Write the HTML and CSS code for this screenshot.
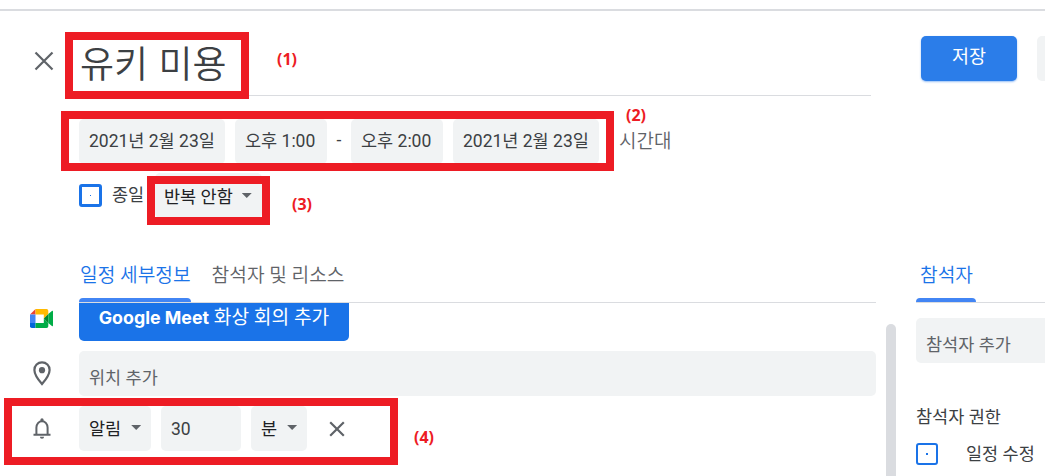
FILE: index.html
```html
<!DOCTYPE html>
<html lang="ko">
<head>
    <meta charset="UTF-8">
    <meta name="viewport" content="width=device-width, initial-scale=1.0">
    <title>유키 미용</title>
    <link rel="stylesheet" href="styles.css">
</head>
<body>
    <div class="page">
        <header class="header">
            <svg class="close" viewBox="0 0 20 20"><path d="M1.5 1.5l17 17M18.5 1.5l-17 17"/></svg>
            <div class="title">유키 미용</div>
            <button class="save">저장</button>
            <div class="more"></div>
        </header>

        <div class="time-row">
            <div class="chip date">2021년 2월 23일</div>
            <div class="chip time">오후 1:00</div>
            <span class="dash">-</span>
            <div class="chip time">오후 2:00</div>
            <div class="chip date">2021년 2월 23일</div>
            <span class="timezone">시간대</span>
        </div>

        <div class="repeat-row">
            <span class="checkbox small-dot"></span>
            <span class="allday">종일</span>
            <div class="chip repeat">반복 안함 <i class="arrow"></i></div>
        </div>

        <div class="columns">
            <main class="details">
                <nav class="tabs">
                    <span class="tab active">일정 세부정보</span>
                    <span class="tab">참석자 및 리소스</span>
                </nav>
                <div class="row meet-row">
                    <svg class="meet-icon" viewBox="0 0 24 19">
                        <path fill="#ea4335" d="M0 5.5L5.5 0v5.5z"/>
                        <path fill="#ffba00" d="M5.5 0h11A1.8 1.8 0 0 1 18.3 1.8V5l-4.5 4.5v-4H5.5z"/>
                        <path fill="#4285f4" d="M0 5.5h5.5V14H0z"/>
                        <path fill="#0066da" d="M0 14h5.5v5H1.8A1.8 1.8 0 0 1 0 17.2z"/>
                        <path fill="#00ac47" d="M5.5 14h8.3V9.5l4.5 4.5v3.2a1.8 1.8 0 0 1-1.8 1.8h-11z"/>
                        <path fill="#00832d" d="M13.8 9.5L18.3 5v9z"/>
                        <path fill="#00ac47" d="M18.3 5l3.6-3c.6-.5 1.1-.2 1.1.5v14c0 .7-.5 1-1.1.5l-3.6-3z"/>
                    </svg>
                    <button class="meet"><b>Google Meet</b> 화상 회의 추가</button>
                </div>
                <div class="row">
                    <svg class="pin-icon" viewBox="0 0 18 25">
                        <path fill="none" stroke="#5f6368" stroke-width="2.2" d="M9 1.4c-4.3 0-7.6 3.3-7.6 7.5C1.4 14.2 9 23 9 23s7.6-8.8 7.6-14.1c0-4.2-3.3-7.5-7.6-7.5z"/>
                        <circle cx="9" cy="9.2" r="3.1" fill="#5f6368"/>
                    </svg>
                    <div class="chip location">위치 추가</div>
                </div>
                <div class="row">
                    <svg class="bell-icon" viewBox="0 0 18 21">
                        <path fill="none" stroke="#5f6368" stroke-width="2" d="M0.5 16.8h17M3.4 16.8V9.5C3.4 6 5.8 3.2 9 3.2s5.6 2.8 5.6 6.3v7.3"/>
                        <path fill="#5f6368" d="M7.4 3.4V1.8a1.6 1.6 0 0 1 3.2 0v1.6zM6.9 18.7h4.2a2.1 2 0 0 1-4.2 0z"/>
                    </svg>
                    <div class="chip notify">알림 <i class="arrow"></i></div>
                    <div class="chip amount">30</div>
                    <div class="chip unit">분 <i class="arrow"></i></div>
                    <svg class="remove" viewBox="0 0 16 16"><path d="M1.2 1.2l13.6 13.6M14.8 1.2L1.2 14.8"/></svg>
                </div>
            </main>

            <div class="scrollbar"></div>

            <aside class="guests">
                <nav class="tabs">
                    <span class="tab active">참석자</span>
                </nav>
                <div class="chip add-guest">참석자 추가</div>
                <div class="permission-title">참석자 권한</div>
                <div class="permission">
                    <span class="checkbox"></span>
                    <span class="permission-name">일정 수정</span>
                </div>
            </aside>
        </div>

        <!-- numbered callouts -->
        <div class="mark mark-1"></div>
        <div class="mark mark-2"></div>
        <div class="mark mark-3"></div>
        <div class="mark mark-4"></div>
        <span class="num num-1">(1)</span>
        <span class="num num-2">(2)</span>
        <span class="num num-3">(3)</span>
        <span class="num num-4">(4)</span>
    </div>
</body>
</html>
```
FILE: styles.css
```css
* {
    box-sizing: border-box;
}

body {
    margin: 0;
    background: #fff;
    color: #3c4043;
    font-family: Roboto, "Noto Sans CJK KR", sans-serif;
    font-size: 17.5px;
}

button {
    border: 0;
    padding: 0;
    font: inherit;
    color: #fff;
}

.page {
    position: relative;
    width: 1045px;
    height: 476px;
    padding-top: 9px;
    overflow: hidden;
}

/* Header */
.header {
    display: flex;
    align-items: flex-start;
    height: 110px;
    padding-left: 34px;
    border-top: 2px solid #dadce0;
}
.close {
    flex: none;
    width: 20px;
    height: 20px;
    margin: 40px 25px 0 0;
}
.close path, .remove path {
    fill: none;
    stroke: #5f6368;
    stroke-width: 2.2;
}
.title {
    flex: none;
    width: 792px;
    height: 85px;
    padding-left: 1px;
    border-bottom: 1px solid #dadce0;
    font-family: "Noto Sans CJK KR", sans-serif;
    font-size: 37px;
    font-weight: 350;
    line-height: 102px;
}
.save {
    flex: none;
    width: 96px;
    height: 45px;
    margin: 25px 20px 0 50px;
    padding-bottom: 2px;
    border-radius: 5px;
    background: #2b7de9;
    box-shadow: 0 1px 2px rgba(26, 115, 232, 0.45);
    font-size: 18.5px;
    line-height: 41px;
}
.more {
    flex: none;
    width: 60px;
    height: 45px;
    margin-top: 25px;
    border-radius: 5px;
    background: #f1f3f4;
}

/* Grey input boxes */
.chip {
    flex: none;
    display: flex;
    align-items: center;
    height: 45px;
    padding-left: 10px;
    border-radius: 5px;
    background: #f1f3f4;
    white-space: nowrap;
}
.arrow {
    width: 10px;
    height: 5px;
    background: #5f6368;
    clip-path: polygon(0 0, 100% 0, 50% 100%);
}

/* Date and time */
.time-row {
    display: flex;
    align-items: center;
    height: 45px;
    padding-left: 79px;
}
.date, .time {
    padding-bottom: 5px;
}
.date {
    width: 146px;
}
.time {
    width: 92px;
}
.date + .time, .time + .date {
    margin-left: 10px;
}
.dash {
    width: 24px;
    padding-bottom: 3px;
    text-align: center;
}
.timezone {
    margin-left: 20px;
    padding-bottom: 5px;
    color: #5f6368;
    font-size: 19px;
    font-weight: 350;
}

.repeat-row {
    display: flex;
    align-items: center;
    height: 45px;
    margin-top: 9px;
    padding-left: 79px;
}
.checkbox {
    display: flex;
    flex: none;
    align-items: center;
    justify-content: center;
    width: 22px;
    height: 22px;
    border: 2px solid #1a73e8;
    border-radius: 3px;
}
.checkbox::after {
    content: "";
    width: 2px;
    height: 2px;
    background: #1a73e8;
}
.small-dot {
    width: 23px;
    height: 23px;
    border-width: 3px;
}
.small-dot::after {
    width: 1px;
    height: 1px;
}
.allday {
    width: 43px;
    margin-left: 10px;
    padding-bottom: 4px;
}
.repeat {
    width: 107px;
    padding-left: 9px;
    color: #202124;
}
.repeat .arrow {
    margin-left: 9px;
}

/* Lower part */
.columns {
    display: flex;
    height: 258px;
    margin-top: 27px;
}
.details {
    flex: none;
    width: 876px;
}
.tabs {
    display: flex;
    gap: 20px;
    height: 58px;
    border-bottom: 1px solid #dadce0;
}
.details .tabs {
    margin-left: 79px;
}
.tab {
    display: flex;
    flex-direction: column;
    height: 57px;
    padding-left: 1px;
    color: #5f6368;
    font-size: 19.2px;
    font-weight: 350;
    line-height: 61px;
    white-space: nowrap;
}
.tab.active {
    color: #1a73e8;
}
.tab.active::after {
    content: "";
    flex: none;
    height: 4px;
    margin: -8px 0 0 -1px;
    border-radius: 4px 4px 0 0;
    background: #4285f4;
}
.row {
    display: flex;
    align-items: center;
    height: 45px;
    margin-top: 10px;
}
.meet-row {
    align-items: flex-start;
    height: 38px;
    margin-top: 0;
}
.meet-icon {
    width: 24px;
    height: 19px;
    margin: 6px 25px 0 30px;
}
.meet {
    width: 270px;
    height: 38px;
    padding-bottom: 9px;
    border-radius: 0 0 5px 5px;
    background: #1a73e8;
    font-size: 19.2px;
    line-height: 28px;
    white-space: nowrap;
}
.meet b {
    font-family: Inter, sans-serif;
    font-size: 17.8px;
    font-weight: 650;
}
.pin-icon {
    width: 18px;
    height: 25px;
    margin: 0 28px 0 33px;
}
.location {
    width: 797px;
    padding-top: 6px;
    color: #5f6368;
}
.bell-icon {
    width: 18px;
    height: 21px;
    margin: 0 28px 0 33px;
}
.notify {
    width: 72px;
    padding-bottom: 2px;
    color: #202124;
}
.notify .arrow, .unit .arrow {
    margin-left: 10px;
}
.amount {
    width: 80px;
    margin: 0 10px;
}
.unit {
    width: 56px;
    padding-bottom: 2px;
    color: #202124;
}
.remove {
    width: 16px;
    height: 16px;
    margin-left: 22px;
}
.scrollbar {
    flex: none;
    width: 10px;
    margin: 79px 20px 0 10px;
    border-radius: 5px 5px 0 0;
    background: #dadce0;
}

/* Guests */
.guests {
    flex: none;
    width: 160px;
}
.guests .tab {
    width: 60px;
    padding-left: 4px;
}
.guests .tab::after {
    margin-left: -4px;
}
.add-guest {
    margin-top: 15px;
    padding-top: 6px;
    color: #5f6368;
}
.permission-title {
    margin-top: 40px;
    line-height: 28px;
}
.permission {
    display: flex;
    align-items: center;
    gap: 28px;
    height: 28px;
    margin-top: 9px;
}
.permission-name {
    padding-bottom: 3px;
}

/* Callouts drawn over the form */
.mark {
    position: absolute;
    border: 8px solid #ed1c24;
}
.mark-1 {
    left: 65px;
    top: 32px;
    width: 184px;
    height: 67px;
}
.mark-2 {
    left: 61px;
    top: 111px;
    width: 553px;
    height: 60px;
}
.mark-3 {
    left: 147px;
    top: 176px;
    width: 123px;
    height: 49px;
}
.mark-4 {
    left: 4px;
    top: 398px;
    width: 394px;
    height: 67px;
}
.num {
    position: absolute;
    color: #ed1c24;
    font-family: "Noto Sans", sans-serif;
    font-size: 16px;
    font-weight: 700;
    line-height: 20px;
}
.num-1 {
    left: 277px;
    top: 49px;
}
.num-2 {
    left: 626px;
    top: 105px;
}
.num-3 {
    left: 292px;
    top: 194px;
}
.num-4 {
    left: 414px;
    top: 427px;
}
```
